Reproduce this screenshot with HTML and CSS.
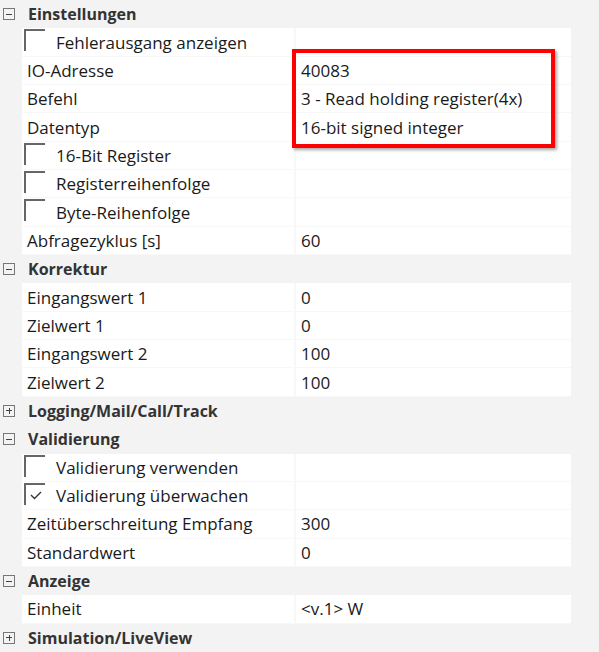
FILE: index.html
```html
<!DOCTYPE html>
<html lang="de">
<head>
    <meta charset="UTF-8">
    <title>Eigenschaften</title>
    <link rel="stylesheet" href="styles.css">
</head>
<body>
    <div class="props">

        <!-- Einstellungen -->
        <div class="group"><span class="toggle minus"></span>Einstellungen</div>
        <div class="row">
            <div class="name"><span class="check"></span>Fehlerausgang anzeigen</div>
            <div class="value"></div>
        </div>
        <div class="row">
            <div class="name">IO-Adresse</div>
            <div class="value">40083</div>
        </div>
        <div class="row">
            <div class="name">Befehl</div>
            <div class="value">3 - Read holding register(4x)</div>
        </div>
        <div class="row">
            <div class="name">Datentyp</div>
            <div class="value">16-bit signed integer</div>
        </div>
        <div class="row">
            <div class="name"><span class="check"></span>16-Bit Register</div>
            <div class="value"></div>
        </div>
        <div class="row">
            <div class="name"><span class="check"></span>Registerreihenfolge</div>
            <div class="value"></div>
        </div>
        <div class="row">
            <div class="name"><span class="check"></span>Byte-Reihenfolge</div>
            <div class="value"></div>
        </div>
        <div class="row">
            <div class="name">Abfragezyklus [s]</div>
            <div class="value">60</div>
        </div>

        <!-- Korrektur -->
        <div class="group"><span class="toggle minus"></span>Korrektur</div>
        <div class="row">
            <div class="name">Eingangswert 1</div>
            <div class="value">0</div>
        </div>
        <div class="row">
            <div class="name">Zielwert 1</div>
            <div class="value">0</div>
        </div>
        <div class="row">
            <div class="name">Eingangswert 2</div>
            <div class="value">100</div>
        </div>
        <div class="row">
            <div class="name">Zielwert 2</div>
            <div class="value">100</div>
        </div>

        <div class="group"><span class="toggle plus"></span>Logging/Mail/Call/Track</div>

        <!-- Validierung -->
        <div class="group"><span class="toggle minus"></span>Validierung</div>
        <div class="row">
            <div class="name"><span class="check"></span>Validierung verwenden</div>
            <div class="value"></div>
        </div>
        <div class="row">
            <div class="name">
                <span class="check">
                    <svg width="12" height="9" viewBox="0 0 12 9"><polyline points="1,4 4.5,7.5 11,1" fill="none" stroke="#333" stroke-width="1.4"/></svg>
                </span>Validierung überwachen
            </div>
            <div class="value"></div>
        </div>
        <div class="row">
            <div class="name">Zeitüberschreitung Empfang</div>
            <div class="value">300</div>
        </div>
        <div class="row">
            <div class="name">Standardwert</div>
            <div class="value">0</div>
        </div>

        <!-- Anzeige -->
        <div class="group"><span class="toggle minus"></span>Anzeige</div>
        <div class="row">
            <div class="name">Einheit</div>
            <div class="value">&lt;v.1&gt; W</div>
        </div>

        <div class="group"><span class="toggle plus"></span>Simulation/LiveView</div>

        <!-- highlight drawn over the values -->
        <div class="highlight"></div>
    </div>
</body>
</html>
```

FILE: styles.css
```css
body {
    margin: 0;
    background: #f3f3f3;
    font-family: "Open Sans", "Noto Sans", sans-serif;
    font-size: 17px;
    color: #1a1a1a;
}

.props {
    position: relative;
    width: 571px;
    display: flex;
    flex-direction: column;
}

.group {
    height: 28.35px;
    display: flex;
    align-items: center;
    font-size: 16px;
    font-weight: bold;
    color: #333;
}

.toggle {
    box-sizing: border-box;
    width: 12px;
    height: 12px;
    margin: 0 13px 0 3px;
    border: 1px solid #777;
    position: relative;
}

.toggle::before,
.toggle::after {
    content: '';
    position: absolute;
    background: #444;
}

.toggle::before {
    left: 2px;
    right: 2px;
    top: 4.5px;
    height: 1px;
}

.toggle.plus::after {
    top: 2px;
    bottom: 2px;
    left: 4.5px;
    width: 1px;
}

.row {
    height: 28.35px;
    margin-left: 22px;
    display: flex;
    gap: 2px;
    padding-bottom: 1px;
    box-sizing: border-box;
    background: #f8f8f8;
}

.name,
.value {
    background: #fff;
    display: flex;
    align-items: center;
    padding-left: 5px;
    white-space: nowrap;
}

.name {
    width: 267px;
}

.value {
    flex: 1;
}

.check {
    box-sizing: border-box;
    align-self: flex-start;
    width: 21px;
    height: 22px;
    margin: 1px 11px 0 -3px;
    border-top: 2px solid #666;
    border-left: 2px solid #666;
    display: flex;
    align-items: center;
    justify-content: center;
    padding-top: 2px;
}

.highlight {
    position: absolute;
    left: 292px;
    top: 49px;
    width: 255px;
    height: 91px;
    border: 4px solid #ff0000;
    box-shadow: 2px 2px 3px rgba(0, 0, 0, 0.35);
}
```
